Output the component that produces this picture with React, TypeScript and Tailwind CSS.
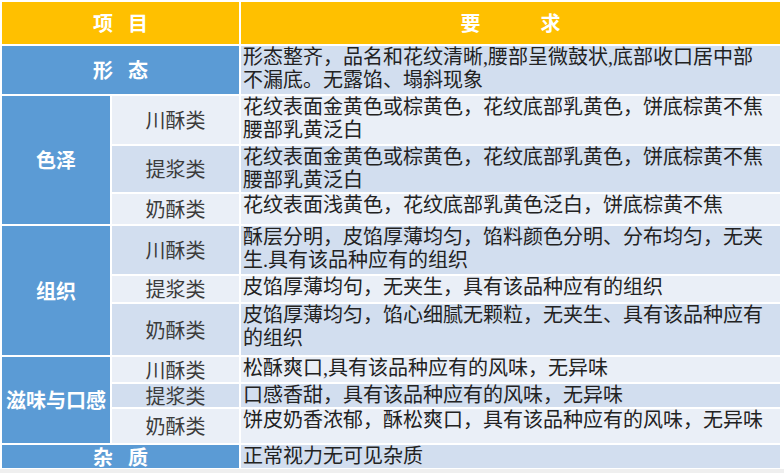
import React from 'react';

type SubRow = { name: string; lines: string[] };
type Group = { title: string; rows: SubRow[] };

const DARK = 'bg-[#d2deef]';
const LIGHT = 'bg-[#eaeff7]';

const groups: Group[] = [
  {
    title: '色泽',
    rows: [
      { name: '川酥类', lines: ['花纹表面金黄色或棕黄色，花纹底部乳黄色，饼底棕黄不焦', '腰部乳黄泛白'] },
      { name: '提浆类', lines: ['花纹表面金黄色或棕黄色，花纹底部乳黄色，饼底棕黄不焦', '腰部乳黄泛白'] },
      { name: '奶酥类', lines: ['花纹表面浅黄色，花纹底部乳黄色泛白，饼底棕黄不焦'] },
    ],
  },
  {
    title: '组织',
    rows: [
      { name: '川酥类', lines: ['酥层分明，皮馅厚薄均匀，馅料颜色分明、分布均匀，无夹', '生.具有该品种应有的组织'] },
      { name: '提浆类', lines: ['皮馅厚薄均句，无夹生，具有该品种应有的组织'] },
      { name: '奶酥类', lines: ['皮馅厚薄均匀，馅心细腻无颗粒，无夹生、具有该品种应有', '的组织'] },
    ],
  },
  {
    title: '滋味与口感',
    rows: [
      { name: '川酥类', lines: ['松酥爽口,具有该品种应有的风味，无异味'] },
      { name: '提浆类', lines: ['口感香甜，具有该品种应有的风味，无异味'] },
      { name: '奶酥类', lines: ['饼皮奶香浓郁，酥松爽口，具有该品种应有的风味，无异味'] },
    ],
  },
];

const Text: React.FC<{ lines: string[]; band: string }> = ({ lines, band }) => (
  <div className={`${band} pl-[2px] whitespace-nowrap text-[20px] leading-[23px] text-[#222] font-['Liberation_Serif','Noto_Sans_CJK_SC',serif]`}>
    {lines.map((l, i) => (
      <div key={i}>{l}</div>
    ))}
  </div>
);

const Spaced: React.FC<{ chars: string[]; gap: string }> = ({ chars, gap }) => (
  <div className={`flex items-center justify-center ${gap}`}>
    {chars.map((c) => (
      <span key={c}>{c}</span>
    ))}
  </div>
);

export default function App() {
  let band = 0;
  const nextBand = () => (band++ % 2 === 0 ? LIGHT : DARK);

  return (
    <div className="w-[784px] h-[473px] bg-white font-['Noto_Sans_CJK_SC',sans-serif] flex flex-col">
      <div className="pl-[2px] pt-[2px]">
        <div className="grid grid-cols-[108px_127px_539px] grid-rows-[42px_48px_48px_46px_30px_48px_26px_51px_25px_23px_34px_23px] gap-[2px] bg-white">
          {/* header */}
          <div className="col-span-2 bg-[#ffc000] text-white font-bold text-[20px] leading-[20px] flex items-center justify-center">
            <Spaced chars={['项', '目']} gap="gap-[15px]" />
          </div>
          <div className="bg-[#ffc000] text-white font-bold text-[20px] leading-[20px] flex items-center justify-center">
            <Spaced chars={['要', '求']} gap="gap-[60px]" />
          </div>

          {/* 形态 */}
          <div className="col-span-2 bg-[#5b9bd5] text-white font-bold text-[20px] leading-[20px] flex items-center justify-center">
            <Spaced chars={['形', '态']} gap="gap-[15px]" />
          </div>
          <Text band={DARK} lines={['形态整齐，品名和花纹清晰,腰部呈微鼓状,底部收口居中部', '不漏底。无露馅、塌斜现象']} />

          {groups.map((g) => (
            <React.Fragment key={g.title}>
              <div className="row-span-3 bg-[#5b9bd5] text-white font-bold text-[20px] leading-[20px] flex items-center justify-center whitespace-nowrap">
                {g.title}
              </div>
              {g.rows.map((r) => {
                const b = nextBand();
                return (
                  <React.Fragment key={g.title + r.name}>
                    <div className={`${b} flex items-center justify-center text-[20px] leading-[20px] text-[#3c3c3c]`}>{r.name}</div>
                    <Text band={b} lines={r.lines} />
                  </React.Fragment>
                );
              })}
            </React.Fragment>
          ))}

          {/* 杂质 */}
          <div className="col-span-2 bg-[#5b9bd5] text-white font-bold text-[20px] leading-[20px] flex items-center justify-center">
            <Spaced chars={['杂', '质']} gap="gap-[15px]" />
          </div>
          <Text band={DARK} lines={['正常视力无可见杂质']} />
        </div>
      </div>
      <div className="mt-[1px] flex-1 bg-[#efefef]" />
    </div>
  );
}
